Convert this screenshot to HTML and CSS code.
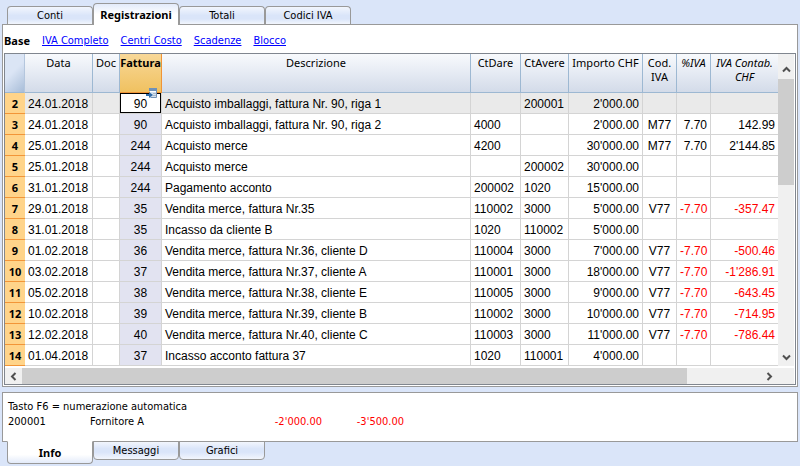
FILE: index.html
```html
<!DOCTYPE html>
<html lang="it">
<head>
<meta charset="utf-8">
<title>Registrazioni</title>
<link rel="stylesheet" href="styles.css">
</head>
<body>
<nav class="tabs tabs-top">
  <button type="button" class="tab">Conti</button>
  <button type="button" class="tab active">Registrazioni</button>
  <button type="button" class="tab">Totali</button>
  <button type="button" class="tab">Codici IVA</button>
</nav>
<main class="panel">
  <nav class="views">
    <strong>Base</strong>
    <a href="#iva">IVA Completo</a>
    <a href="#centri">Centri Costo</a>
    <a href="#scadenze">Scadenze</a>
    <a href="#blocco">Blocco</a>
  </nav>
  <div class="sheet">
    <div class="sheet-main">
      <table>
        <colgroup>
          <col class="w-num"><col class="w-date"><col class="w-doc"><col class="w-inv"><col><col class="w-debit"><col class="w-credit"><col class="w-amount"><col class="w-code"><col class="w-code"><col class="w-vat">
        </colgroup>
        <thead>
          <tr><th class="corner"></th><th>Data</th><th>Doc</th><th class="current">Fattura</th><th>Descrizione</th><th>CtDare</th><th>CtAvere</th><th>Importo CHF</th><th>Cod.<br>IVA</th><th class="calc">%IVA</th><th class="calc">IVA Contab.<br>CHF</th></tr>
        </thead>
        <tbody>
          <tr class="selected"><th>2</th><td>24.01.2018</td><td></td><td class="inv focus">90<svg class="cell-icon" width="12" height="11" viewBox="0 0 12 11" aria-hidden="true"><path fill="#d5e2ef" stroke="#7592b4" d="M3.500.5h7v9h-6"/><path fill="#6f91b8" d="M3 0h8v3H3z"/><path fill="#fff" d="M4 3h6v1H4z"/><path stroke="#a8b9cc" d="M7 5.500h3M7 7.500h3"/><path fill="none" stroke="#2e6cab" stroke-width="2" d="M0 7h5"/><path fill="#2e6cab" d="M3 4l4 3-4 3z"/></svg></td><td>Acquisto imballaggi, fattura Nr. 90, riga 1</td><td></td><td>200001</td><td class="num">2'000.00</td><td class="mid"></td><td class="num"></td><td class="num"></td></tr>
          <tr><th>3</th><td>24.01.2018</td><td></td><td class="inv">90</td><td>Acquisto imballaggi, fattura Nr. 90, riga 2</td><td>4000</td><td></td><td class="num">2'000.00</td><td class="mid">M77</td><td class="num">7.70</td><td class="num">142.99</td></tr>
          <tr><th>4</th><td>25.01.2018</td><td></td><td class="inv">244</td><td>Acquisto merce</td><td>4200</td><td></td><td class="num">30'000.00</td><td class="mid">M77</td><td class="num">7.70</td><td class="num">2'144.85</td></tr>
          <tr><th>5</th><td>25.01.2018</td><td></td><td class="inv">244</td><td>Acquisto merce</td><td></td><td>200002</td><td class="num">30'000.00</td><td></td><td></td><td></td></tr>
          <tr><th>6</th><td>31.01.2018</td><td></td><td class="inv">244</td><td>Pagamento acconto</td><td>200002</td><td>1020</td><td class="num">15'000.00</td><td></td><td></td><td></td></tr>
          <tr><th>7</th><td>29.01.2018</td><td></td><td class="inv">35</td><td>Vendita merce, fattura Nr.35</td><td>110002</td><td>3000</td><td class="num">5'000.00</td><td class="mid">V77</td><td class="num neg">-7.70</td><td class="num neg">-357.47</td></tr>
          <tr><th>8</th><td>31.01.2018</td><td></td><td class="inv">35</td><td>Incasso da cliente B</td><td>1020</td><td>110002</td><td class="num">5'000.00</td><td></td><td></td><td></td></tr>
          <tr><th>9</th><td>01.02.2018</td><td></td><td class="inv">36</td><td>Vendita merce, fattura Nr.36, cliente D</td><td>110004</td><td>3000</td><td class="num">7'000.00</td><td class="mid">V77</td><td class="num neg">-7.70</td><td class="num neg">-500.46</td></tr>
          <tr><th>10</th><td>03.02.2018</td><td></td><td class="inv">37</td><td>Vendita merce, fattura Nr.37, cliente A</td><td>110001</td><td>3000</td><td class="num">18'000.00</td><td class="mid">V77</td><td class="num neg">-7.70</td><td class="num neg">-1'286.91</td></tr>
          <tr><th>11</th><td>05.02.2018</td><td></td><td class="inv">38</td><td>Vendita merce, fattura Nr.38, cliente E</td><td>110005</td><td>3000</td><td class="num">9'000.00</td><td class="mid">V77</td><td class="num neg">-7.70</td><td class="num neg">-643.45</td></tr>
          <tr><th>12</th><td>10.02.2018</td><td></td><td class="inv">39</td><td>Vendita merce, fattura Nr.39, cliente B</td><td>110002</td><td>3000</td><td class="num">10'000.00</td><td class="mid">V77</td><td class="num neg">-7.70</td><td class="num neg">-714.95</td></tr>
          <tr><th>13</th><td>12.02.2018</td><td></td><td class="inv">40</td><td>Vendita merce, fattura Nr.40, cliente C</td><td>110003</td><td>3000</td><td class="num">11'000.00</td><td class="mid">V77</td><td class="num neg">-7.70</td><td class="num neg">-786.44</td></tr>
          <tr><th>14</th><td>01.04.2018</td><td></td><td class="inv">37</td><td>Incasso acconto fattura 37</td><td>1020</td><td>110001</td><td class="num">4'000.00</td><td></td><td></td><td></td></tr>
        </tbody>
      </table>
      <div class="vbar">
        <button type="button" class="up" aria-label="Su"><svg width="9" height="7" viewBox="0 0 9 7"><path fill="none" stroke="#505050" stroke-width="2" d="M1 5.500l3.500-3.500L8 5.500"/></svg></button>
        <div class="vthumb"></div>
        <button type="button" class="down" aria-label="Giù"><svg width="9" height="7" viewBox="0 0 9 7"><path fill="none" stroke="#505050" stroke-width="2" d="M1 1.500L4.500 5 8 1.500"/></svg></button>
      </div>
    </div>
    <div class="hbar">
      <button type="button" aria-label="Sinistra"><svg width="7" height="9" viewBox="0 0 7 9"><path fill="none" stroke="#505050" stroke-width="2" d="M5.500 1L2 4.500 5.500 8"/></svg></button>
      <div class="htrack"><div class="hthumb"></div></div>
      <button type="button" aria-label="Destra"><svg width="7" height="9" viewBox="0 0 7 9"><path fill="none" stroke="#505050" stroke-width="2" d="M1.500 1L5 4.500 1.500 8"/></svg></button>
    </div>
  </div>
</main>
<section class="info">
  <p>Tasto F6 = numerazione automatica</p>
  <div class="account"><span>200001</span><span>Fornitore A</span><span class="num neg">-2'000.00</span><span class="num neg">-3'500.00</span></div>
</section>
<nav class="tabs tabs-bottom">
  <button type="button" class="tab active">Info</button>
  <button type="button" class="tab">Messaggi</button>
  <button type="button" class="tab">Grafici</button>
</nav>
</body>
</html>
```
FILE: styles.css
```css
* { box-sizing: border-box; }
body {
  margin: 0;
  padding: 3px 2px 0;
  background: #dae5f9;
  color: #000;
  font: 11px/15px "DejaVu Sans Condensed", "DejaVu Sans", sans-serif;
}
button { font: inherit; color: inherit; padding: 0; border: 0; }
p { margin: 0; }

.tabs { display: flex; padding: 0 5px; position: relative; }
.tab {
  width: 86px;
  height: 18px;
  border: 1px solid #999;
}
.tabs-top { align-items: flex-end; height: 21px; }
.tabs-top .tab {
  border-bottom: 0;
  border-radius: 4px 4px 0 0;
  background: linear-gradient(#f2f6fd, #dae5f9 50%, #dae5f9 70%, #f2f6fd);
}
.tab.active { font: bold 11px/15px "Noto Sans", sans-serif; }
.tabs-top .tab.active { height: 22px; margin-bottom: -1px; background: linear-gradient(#e3ebfa, #fff 50%); }
.tabs-bottom { align-items: flex-start; margin-top: -1px; }
.tabs-bottom .tab {
  height: 19px;
  border-radius: 0 0 4px 4px;
  background: linear-gradient(#f2f6fd, #dae5f9 40%, #dae5f9 60%, #f2f6fd);
}
.tabs-bottom .tab.active { height: 23px; border-top-color: #fff; background: linear-gradient(#fff 60%, #e3ebfa); }

.panel { border: 1px solid #999; background: #fff; padding: 0 1px 1px; }
.views { display: flex; gap: 12px; height: 28px; align-items: center; padding-top: 2px; }
.views strong { font: bold 11px/15px "Noto Sans", sans-serif; }
.views a { color: #00f; }

.sheet { border: 1px solid #80868f; padding-right: 1px; }
.sheet-main { display: flex; padding-bottom: 2px; }
table { flex: 1; width: 0; table-layout: fixed; border-spacing: 0; font: 11px/15px "Noto Sans", sans-serif; }
.w-num { width: 20px; }
.w-date { width: 68px; }
.w-doc { width: 27px; }
.w-inv { width: 42px; }
.w-debit { width: 50px; }
.w-credit { width: 48px; }
.w-amount { width: 74px; }
.w-code { width: 34px; }
.w-vat { width: 67px; }
thead th {
  height: 39px;
  padding: 2px 0 0;
  vertical-align: top;
  font-weight: normal;
  line-height: 14px;
  white-space: nowrap;
  border-right: 1px solid #9db8d2;
  border-bottom: 1px solid #9db8d2;
  background: linear-gradient(#f8fafd, #d3dbe9);
}
thead .corner { background: linear-gradient(135deg, #dbe5f5 45%, #a8bdd8); border-right-color: #b4c6dd; }
thead .current {
  font-weight: bold;
  background: linear-gradient(#f8d898, #f0c160);
  border-color: #f09436;
}
thead .calc { font-style: italic; }
td, tbody th { height: 21px; padding: 0; border-bottom: 1px solid #d4d4d4; }
td {
  padding: 2px 3px 0;
  border-right: 1px solid #d4d4d4;
  font: 12px/16px "Liberation Sans", sans-serif;
  white-space: nowrap;
}
tr > :last-child { border-right: 0; }
tbody th { background: #ffd48a; border-bottom-color: #f29538; font-weight: bold; }
.selected td { background: #eaeaea; }
.num { text-align: right; }
.mid { text-align: center; }
.neg { color: #f00; }
.inv { background: #e2e3f1; text-align: center; }
.selected .focus { position: relative; background: #fff; box-shadow: inset 0 0 0 1px #000; }
.cell-icon { position: absolute; right: 3px; top: -5px; }

.vbar { width: 16px; display: flex; flex-direction: column; background: #f0f0f0; }
.vbar button, .hbar button { display: flex; align-items: center; justify-content: center; background: #f0f0f0; }
.up { height: 25px; padding-top: 6px; align-items: flex-start; }
.vthumb { height: 106px; background: #cdcdcd; }
.down { height: 17px; margin-top: auto; }
.hbar { display: flex; height: 16px; padding-right: 16px; background: #f0f0f0; }
.hbar button { width: 17px; }
.htrack { flex: 1; }
.hthumb { width: 90%; height: 100%; background: #cdcdcd; }

.info {
  height: 50px;
  margin-top: 5px;
  padding: 6px 5px;
  border: 1px solid #999;
  background: #fff;
}
.account { display: grid; grid-template-columns: 82px 150px 82px 82px; }
```
